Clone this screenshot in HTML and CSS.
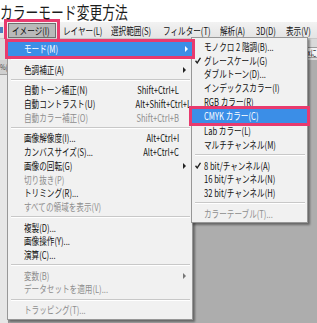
FILE: index.html
```html
<!DOCTYPE html>
<html lang="ja">
<head>
    <meta charset="UTF-8">
    <meta name="viewport" content="width=device-width, initial-scale=1.0">
    <link rel="stylesheet" href="styles.css">
    <title>カラーモード変更方法</title>
</head>
<body>

<div class="title"><span class="title-text">カラーモード変更方法</span></div>

<div class="menubar">
    <span class="ps-icon"></span>
    <div class="mb-item mb-open" style="width:48px"><span class="t">イメージ(I)</span></div>
    <div class="mb-item" style="width:48px"><span class="t">レイヤー(L)</span></div>
    <div class="mb-item" style="width:52px"><span class="t">選択範囲(S)</span></div>
    <div class="mb-item" style="width:57px"><span class="t">フィルター(T)</span></div>
    <div class="mb-item" style="width:36px"><span class="t">解析(A)</span></div>
    <div class="mb-item" style="width:30px"><span class="t">3D(D)</span></div>
    <div class="mb-item" style="width:32px"><span class="t">表示(V)</span></div>
</div>

<div class="optbar">
    <div class="opt-field"><span class="t">pixに</span></div>
</div>

<div class="workspace">
    <div class="doc-strip">
        <div class="doc-tab"><span class="t">%(</span></div>
    </div>
    <div class="canvas-gray"></div>
</div>

<!-- イメージ menu -->
<div class="menu menu-main">
    <div class="item hot marked"><span class="t">モード(M)</span><span class="arrow"></span></div>
    <div class="sep"></div>
    <div class="item"><span class="t">色調補正(A)</span><span class="arrow"></span></div>
    <div class="sep"></div>
    <div class="item"><span class="t">自動トーン補正(N)</span><span class="k">Shift+Ctrl+L</span></div>
    <div class="item"><span class="t">自動コントラスト(U)</span><span class="k">Alt+Shift+Ctrl+L</span></div>
    <div class="item off"><span class="t">自動カラー補正(O)</span><span class="k">Shift+Ctrl+B</span></div>
    <div class="sep"></div>
    <div class="item"><span class="t">画像解像度(I)...</span><span class="k">Alt+Ctrl+I</span></div>
    <div class="item"><span class="t">カンバスサイズ(S)...</span><span class="k">Alt+Ctrl+C</span></div>
    <div class="item"><span class="t">画像の回転(G)</span><span class="arrow"></span></div>
    <div class="item off"><span class="t">切り抜き(P)</span></div>
    <div class="item"><span class="t">トリミング(R)...</span></div>
    <div class="item off"><span class="t">すべての領域を表示(V)</span></div>
    <div class="sep"></div>
    <div class="item"><span class="t">複製(D)...</span></div>
    <div class="item"><span class="t">画像操作(Y)...</span></div>
    <div class="item"><span class="t">演算(C)...</span></div>
    <div class="sep"></div>
    <div class="item off"><span class="t">変数(B)</span><span class="arrow"></span></div>
    <div class="item off"><span class="t">データセットを適用(L)...</span></div>
    <div class="sep"></div>
    <div class="item off"><span class="t">トラッピング(T)...</span></div>
</div>

<!-- モード submenu -->
<div class="menu menu-sub">
    <div class="item"><span class="t">モノクロ 2 階調(B)...</span></div>
    <div class="item"><svg class="check" width="6" height="7" viewBox="0 0 6 7"><path d="M0.5 3.8 L2.2 5.9 L5.5 0.8" fill="none" stroke="#222" stroke-width="1.4"/></svg><span class="t">グレースケール(G)</span></div>
    <div class="item"><span class="t">ダブルトーン(D)...</span></div>
    <div class="item"><span class="t">インデックスカラー(I)</span></div>
    <div class="item"><span class="t">RGB カラー(R)</span></div>
    <div class="item hot marked"><span class="t">CMYK カラー(C)</span></div>
    <div class="item"><span class="t">Lab カラー(L)</span></div>
    <div class="item"><span class="t">マルチチャンネル(M)</span></div>
    <div class="sep"></div>
    <div class="item"><svg class="check" width="6" height="7" viewBox="0 0 6 7"><path d="M0.5 3.8 L2.2 5.9 L5.5 0.8" fill="none" stroke="#222" stroke-width="1.4"/></svg><span class="t">8 bit/チャンネル(A)</span></div>
    <div class="item"><span class="t">16 bit/チャンネル(N)</span></div>
    <div class="item"><span class="t">32 bit/チャンネル(H)</span></div>
    <div class="sep"></div>
    <div class="item off"><span class="t">カラーテーブル(T)...</span></div>
</div>

</body>
</html>
```

FILE: styles.css
```css
body {
    position: relative;
    margin: 0;
    width: 317px;
    height: 323px;
    overflow: hidden;
    background: #adadad;
    font-family: "Noto Sans CJK JP", "Noto Sans", sans-serif;
    font-size: 10px;
    color: #111;
    display: flex;
    flex-direction: column;
}

.t {
    display: inline-block;
    white-space: nowrap;
    transform: scaleX(.76);
    transform-origin: left center;
}

.title {
    height: 22px;
    background: #fff;
    flex: none;
}

.title-text {
    display: block;
    height: 22px;
    font-size: 17.5px;
    line-height: 24px;
    color: #1c1c1c;
    white-space: nowrap;
    transform: scaleX(.73);
    transform-origin: left center;
}

.menubar {
    height: 17px;
    flex: none;
    display: flex;
    align-items: center;
    background: linear-gradient(#f2f2f2, #e4e4e4);
    border-bottom: 1px solid #c9c9c9;
    box-sizing: border-box;
}

.ps-icon {
    width: 3px;
    height: 6px;
    margin-right: 5px;
    background: #4a7fc0;
}

.mb-item {
    flex: none;
    height: 15px;
    line-height: 15px;
    box-sizing: border-box;
    padding-left: 1px;
}

.mb-open {
    margin-right: 6px;
    padding-left: 3px;
    background: #b9b9b9;
    border: 1px solid #6f6f6f;
    line-height: 13px;
    outline: 3px solid #e83a6e;
    outline-offset: 1px;
}

.optbar {
    height: 21px;
    flex: none;
    background: #d9d9d9;
    display: flex;
    justify-content: flex-end;
    align-items: center;
}

.opt-field {
    width: 26px;
    height: 9px;
    margin-top: 5px;
    margin-right: -12px;
    background: #f4f4f4;
    border: 1px solid #9a9a9a;
    font-size: 8px;
    line-height: 9px;
    overflow: hidden;
}

.workspace {
    flex: 1;
    display: flex;
}

.doc-strip {
    width: 8px;
    background: #e6e6e6;
    border-right: 1px solid #9c9c9c;
}

.doc-tab {
    height: 14px;
    font-size: 8px;
    line-height: 14px;
    background: #cfcfcf;
    border-bottom: 1px solid #a0a0a0;
    overflow: hidden;
    color: #444;
}

.canvas-gray {
    flex: 1;
}

/* menus */
.menu {
    position: absolute;
    box-sizing: border-box;
    background: #f1f1f1;
    border: 1px solid #979797;
    box-shadow: 2px 2px 2px rgba(0, 0, 0, .4);
    padding: 1px 0 2px;
}

.menu-main {
    left: 7px;
    top: 39px;
    width: 186px;
}

.menu-sub {
    left: 191px;
    top: 37px;
    width: 117px;
    padding-top: 2px;
}

.item {
    position: relative;
    display: flex;
    align-items: center;
    height: 13.7px;
    line-height: 13.7px;
    padding: 0 11px 0 14px;
    margin: 0 2px;
}

.menu-sub .item {
    padding-left: 10px;
}

.item.off {
    color: #8e8e8e;
}

.item.hot {
    background: #3b8ee7;
    color: #fff;
}

.item.marked {
    outline: 3px solid #e83a6e;
    outline-offset: 0;
    z-index: 1;
}

.menu-main .item.marked {
    margin: 1px 0 2px;
    padding-left: 16px;
}

.menu-sub .item.marked {
    margin: 1px 0;
    padding-left: 12px;
}

.k {
    margin-left: auto;
    display: inline-block;
    white-space: nowrap;
    transform: scaleX(.76);
    transform-origin: right center;
}

.arrow {
    position: absolute;
    right: 4px;
    top: 4px;
    width: 0;
    height: 0;
    border-top: 3px solid transparent;
    border-bottom: 3px solid transparent;
    border-left: 3px solid #222;
}

.item.hot .arrow {
    border-left-color: #fff;
}

.item.off .arrow {
    border-left-color: #777;
}

.check {
    position: absolute;
    left: 1px;
    top: 3.5px;
}

.sep {
    margin: 2.5px 2px 2.5px 3px;
    border-top: 1px solid #c8c8c8;
    border-bottom: 1px solid #fff;
}
```
